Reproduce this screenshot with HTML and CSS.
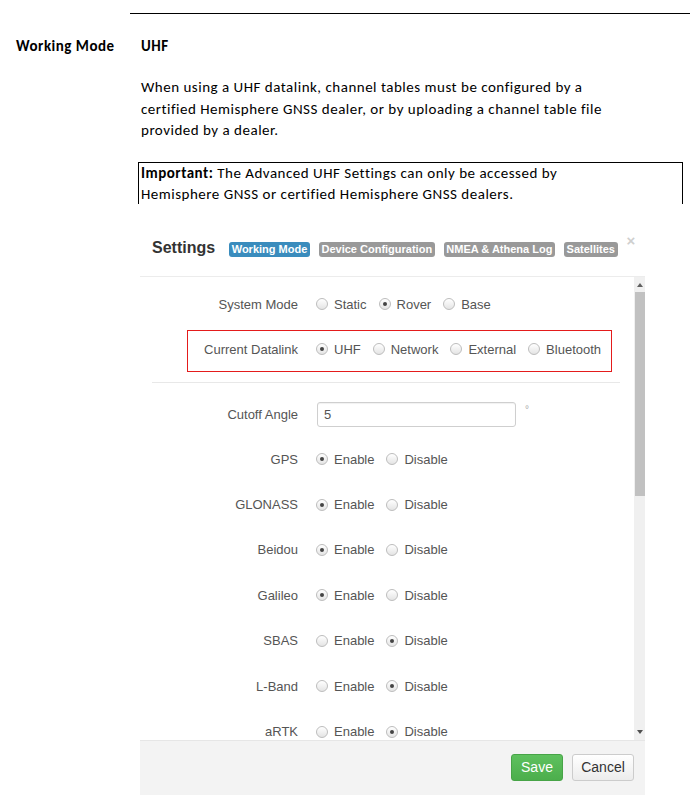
FILE: index.html
```html
<!DOCTYPE html>
<html>
<head>
<meta charset="utf-8">
<link rel="stylesheet" href="styles.css">
</head>
<body>
<div class="page">
  <div class="rule"></div>
  <div class="heading-row">
    <div class="side-label">Working Mode</div>
    <div class="heading">UHF</div>
  </div>
  <p class="para">When using a UHF datalink, channel tables must be configured by a<br>certified Hemisphere GNSS dealer, or by uploading a channel table file<br>provided by a dealer.</p>
  <div class="note"><b>Important:</b> The Advanced UHF Settings can only be accessed by<br>Hemisphere GNSS or certified Hemisphere GNSS dealers.</div>

  <div class="modal">
    <div class="modal-header">
      <span class="title">Settings</span>
      <span class="tab active">Working Mode</span>
      <span class="tab">Device Configuration</span>
      <span class="tab">NMEA &amp; Athena Log</span>
      <span class="tab">Satellites</span>
      <span class="close">×</span>
    </div>
    <div class="modal-body">
      <div class="content">
        <div class="row">
          <span class="label">System Mode</span>
          <span class="opt"><span class="radio"></span>Static</span>
          <span class="opt"><span class="radio on"></span>Rover</span>
          <span class="opt"><span class="radio"></span>Base</span>
        </div>
        <div class="row">
          <span class="label">Current Datalink</span>
          <span class="opt"><span class="radio on"></span>UHF</span>
          <span class="opt"><span class="radio"></span>Network</span>
          <span class="opt"><span class="radio"></span>External</span>
          <span class="opt"><span class="radio"></span>Bluetooth</span>
        </div>
        <div class="highlight"></div>
        <div class="sep"></div>
        <div class="row row-first">
          <span class="label">Cutoff Angle</span>
          <span class="input">5</span>
          <span class="unit">°</span>
        </div>
        <div class="row row-s">
          <span class="label">GPS</span>
          <span class="opt"><span class="radio on"></span>Enable</span>
          <span class="opt"><span class="radio"></span>Disable</span>
        </div>
        <div class="row row-s">
          <span class="label">GLONASS</span>
          <span class="opt"><span class="radio on"></span>Enable</span>
          <span class="opt"><span class="radio"></span>Disable</span>
        </div>
        <div class="row row-s">
          <span class="label">Beidou</span>
          <span class="opt"><span class="radio on"></span>Enable</span>
          <span class="opt"><span class="radio"></span>Disable</span>
        </div>
        <div class="row row-s">
          <span class="label">Galileo</span>
          <span class="opt"><span class="radio on"></span>Enable</span>
          <span class="opt"><span class="radio"></span>Disable</span>
        </div>
        <div class="row row-s">
          <span class="label">SBAS</span>
          <span class="opt"><span class="radio"></span>Enable</span>
          <span class="opt"><span class="radio on"></span>Disable</span>
        </div>
        <div class="row row-s">
          <span class="label">L-Band</span>
          <span class="opt"><span class="radio"></span>Enable</span>
          <span class="opt"><span class="radio on"></span>Disable</span>
        </div>
        <div class="row row-s">
          <span class="label">aRTK</span>
          <span class="opt"><span class="radio"></span>Enable</span>
          <span class="opt"><span class="radio on"></span>Disable</span>
        </div>
      </div>
      <div class="scrollbar">
        <div class="arrow up"></div>
        <div class="thumb"></div>
        <div class="track"></div>
        <div class="arrow down"></div>
      </div>
    </div>
    <div class="modal-footer">
      <span class="btn save">Save</span>
      <span class="btn cancel">Cancel</span>
    </div>
  </div>
</div>
</body>
</html>
```
FILE: styles.css
```css
html, body {
  margin: 0;
  padding: 0;
  background: #fff;
}
.page {
  padding-top: 13px;
  font-family: "Carlito", "Calibri", "Lato", sans-serif;
  font-size: 15px;
  letter-spacing: 0.5px;
  color: #000;
}
.rule {
  margin-left: 130px;
  width: 560px;
  border-top: 1px solid #000;
}
.heading-row {
  display: grid;
  grid-template-columns: 125px 1fr;
  padding-left: 16px;
  margin-top: 21px;
  line-height: 22px;
  font-weight: bold;
}
.para {
  margin: 20px 0 0 141px;
  line-height: 21.5px;
  white-space: nowrap;
}
.note {
  margin: 20px 0 0 138px;
  width: 541px;
  height: 41px;
  border: 1px solid #000;
  border-bottom: none;
  padding-left: 2px;
  line-height: 21px;
  white-space: nowrap;
}
.modal {
  margin: 21px 0 0 140px;
  width: 505px;
  font-family: "Liberation Sans", Arial, sans-serif;
  font-size: 13px;
  letter-spacing: 0;
  color: #555;
}
.modal-header {
  border-bottom: 1px solid #ececec;
  display: flex;
  align-items: center;
  padding: 0 0 4px 12px;
  box-sizing: border-box;
  height: 52px;
}
.title {
  font-size: 16px;
  font-weight: bold;
  color: #333;
  margin-right: 14px;
}
.tab {
  font-size: 11px;
  font-weight: bold;
  color: #fff;
  background: #999;
  border-radius: 3px;
  padding: 1px 2.6px;
  line-height: 13px;
  margin-right: 9px;
  margin-top: 3px;
}
.tab.active {
  background: #3a8cbd;
}
.close {
  align-self: flex-start;
  margin-top: 8px;
  font-size: 15px;
  font-weight: bold;
  color: #cfcfcf;
  line-height: 15px;
}
.modal-body {
  display: flex;
  height: 463px;
}
.content {
  position: relative;
  width: 494px;
  overflow: hidden;
  padding-top: 5px;
  box-sizing: border-box;
}
.row {
  display: flex;
  align-items: center;
  height: 45px;
}
.row-first {
  margin-top: 9px;
}
.row-s {
  height: 45.4px;
}
.label {
  width: 146px;
  margin-left: 12px;
  margin-right: 18px;
  text-align: right;
  flex: none;
}
.opt {
  display: flex;
  align-items: center;
  margin-right: 12px;
}
.radio {
  width: 10px;
  height: 10px;
  border-radius: 50%;
  border: 1px solid #bdbdbd;
  background: linear-gradient(#ffffff, #e4e4e4);
  margin-right: 6px;
  position: relative;
  flex: none;
}
.radio.on::after {
  content: "";
  position: absolute;
  left: 3px;
  top: 3px;
  width: 4px;
  height: 4px;
  border-radius: 50%;
  background: #444;
}
.highlight {
  position: absolute;
  left: 47px;
  top: 53px;
  width: 423px;
  height: 40px;
  border: 1px solid #e41b1b;
}
.sep {
  margin: 10px 0 0 12px;
  width: 468px;
  height: 1px;
  background: #e8e8e8;
}
.input {
  width: 191px;
  height: 23px;
  border: 1px solid #cfcfcf;
  border-radius: 3px;
  box-shadow: inset 0 1px 1px rgba(0,0,0,0.06);
  padding-left: 6px;
  line-height: 23px;
  margin-left: 1px;
  color: #555;
  font-size: 13px;
}
.unit {
  margin-left: 9px;
  align-self: flex-start;
  margin-top: 12px;
  color: #aaa;
  font-size: 10px;
}
.scrollbar {
  width: 11px;
  background: #f0f0f0;
  display: flex;
  flex-direction: column;
  align-items: center;
}
.arrow {
  width: 0;
  height: 0;
  border-left: 3px solid transparent;
  border-right: 3px solid transparent;
}
.arrow.up {
  margin-top: 6px;
  border-bottom: 4px solid #606060;
  margin-bottom: 5px;
}
.arrow.down {
  margin-bottom: 6px;
  border-top: 4px solid #505050;
}
.thumb {
  width: 10px;
  margin-left: 1px;
  height: 204px;
  background: #c1c1c1;
}
.track {
  flex: 1;
}
.modal-footer {
  height: 55px;
  box-sizing: border-box;
  border-top: 1px solid #e6e6e6;
  background: #f3f3f3;
  display: flex;
  justify-content: flex-end;
  align-items: flex-start;
  padding: 13px 11px 0 0;
  gap: 9px;
}
.btn {
  height: 27px;
  box-sizing: border-box;
  border-radius: 3px;
  font-size: 14px;
  line-height: 25px;
  text-align: center;
}
.save {
  width: 52px;
  background: linear-gradient(#5ec15e, #4cae4c);
  border: 1px solid #47a447;
  color: #fff;
}
.cancel {
  width: 62px;
  background: linear-gradient(#ffffff, #ececec);
  border: 1px solid #cccccc;
  color: #333;
}
```
